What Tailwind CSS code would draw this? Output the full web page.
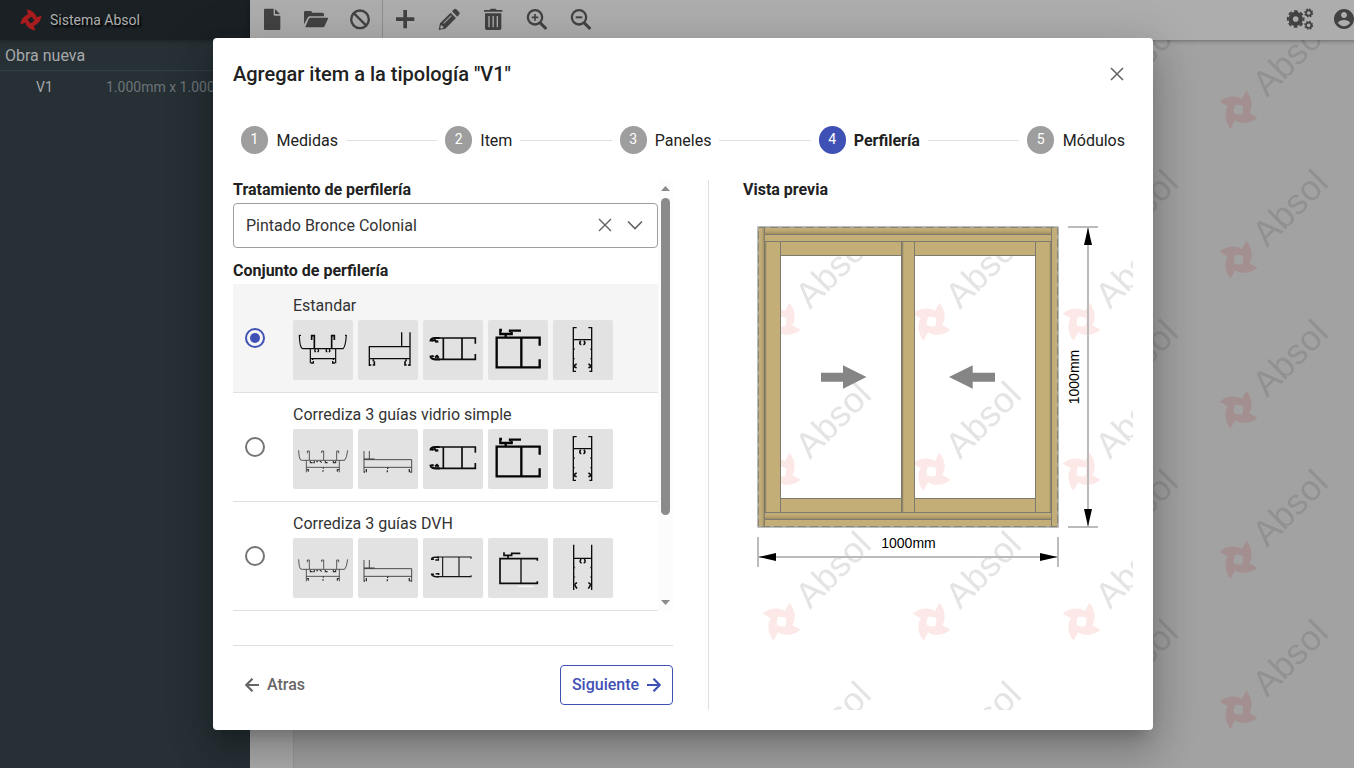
<!DOCTYPE html>
<html lang="es">
<head>
<meta charset="utf-8">
<title>Sistema Absol</title>
<script src="https://cdn.jsdelivr.net/npm/@tailwindcss/browser@4"></script>
</head>
<body class="h-[768px] overflow-hidden bg-[#a2a2a2] font-['Roboto',sans-serif] text-[#212121]">
<svg class="absolute h-0 w-0" aria-hidden="true">
  <defs>
    <path id="logo" fill-rule="evenodd" d="M10-32L24-57Q42-36 39-8Q38 2 32 10L57 24Q36 42 8 39Q-2 38-10 32L-24 57Q-42 36-39 8Q-38-2-32-10L-57-24Q-36-42-8-39Q2-38 10-32ZM-11-14Q-16-2-14 11Q-2 16 11 14Q16 2 14-11Q2-16-11-14Z"/>
    <pattern id="wmPreview" width="150" height="150" patternUnits="userSpaceOnUse" patternTransform="translate(0 30)">
      <use href="#logo" transform="translate(38.5 111.7) scale(.333)" fill="#fde8e8"/>
      <text transform="translate(67 100) rotate(-45)" font-family="Liberation Sans, sans-serif" font-size="35.700" fill="#e4e4e4">Absol</text>
    </pattern>
    <pattern id="wmCanvas" width="150" height="150" patternUnits="userSpaceOnUse" patternTransform="translate(6 -42)">
      <use href="#logo" transform="translate(38.5 111.7) scale(.333)" fill="#a38f8f"/>
      <text transform="translate(67 100) rotate(-45)" font-family="Liberation Sans, sans-serif" font-size="35.700" fill="#919191">Absol</text>
    </pattern>
    <symbol id="p-frame" viewBox="0 0 180 180"><g fill="none" stroke="#0c0c0c" stroke-width="4">
      <path d="M19 45Q20 78 26 84L30 86H150Q158 80 160 45M20 46h4M156 46h4M52 86v44M128 86v44M52 116h76" stroke-width="3.500"/>
      <path d="M56 60V47h8v38M124 60V47h-8v38" stroke-width="5"/>
      <path d="M67 87q-4 8 2 8M75 87q4 8-2 8M101 87q-4 8 2 8M109 87q4 8-2 8M59 116v4M54 129h7v-6M121 116v4M126 129h-7v-6" stroke-width="4"/></g></symbol>
    <symbol id="p-sill" viewBox="0 0 180 180"><g fill="none" stroke="#0c0c0c" stroke-width="4">
      <path d="M34 138V80H156M156 37V138M131 37V80M34 116H156M34 135h6M156 135h-6"/><path d="M46 118v6M49 124v11h-5M144 118v6M141 124v11h5" stroke-width="5"/></g></symbol>
    <symbol id="p-rail" viewBox="0 0 180 180"><g fill="none" stroke="#0c0c0c" stroke-width="5">
      <path d="M46 54H157V71M46 118H157V102M61 54v64M117 54v64"/>
      <path d="M50 54H36q-12 1-13 7h6l3 3M34 58l5 7 7-1M50 118H36q-12-1-13-8l9-2M36 112l6-4 5 5" stroke-width="6.500"/></g></symbol>
    <symbol id="p-stile" viewBox="0 0 180 180"><g fill="none" stroke="#050505" stroke-width="6">
      <path d="M155 77V53H26V142H155V118" stroke-width="7"/><path d="M100 53V142" stroke-width="7"/>
      <path d="M42 30h-5v12h34v-6M53 42v12M66 37V32H99" stroke-width="7"/></g></symbol>
    <symbol id="p-post" viewBox="0 0 180 180"><g fill="none" stroke="#0c0c0c" stroke-width="4">
      <path d="M71 23H61V154H69M106 23H116V154H109M61 59H116"/><path d="M83 62q-6 10 2 12M93 62q6 10-2 12M71 132q-9 3-5 10l5 1M106 132q9 3 5 10l-5 1" stroke-width="5"/><path d="M64 85v5M113 85v5M64 114v4M113 114v4" stroke-width="2"/></g></symbol>
    <symbol id="p-frame3" viewBox="0 0 180 180"><g fill="none" stroke="#333" stroke-width="2.4">
      <path d="M17 64Q18 88 23 93L28 94H155Q161 88 164 64M40 94v36M139 94v36M40 115h99M43 73v-7h6v27M86 72v-6h6v27M137 73v-7h-6v27"/>
      <path d="M52 95v6h7M64 95v6h-3M70 98h5M80 95l6 6M97 95v6h7M121 95v6h7v-6M41 122h5v6M91 115v4M90 123v5M138 122h-5v6" stroke-width="3.4"/></g></symbol>
    <symbol id="p-sill3" viewBox="0 0 180 180"><g fill="none" stroke="#333" stroke-width="2.6">
      <path d="M18 66V131M34 66V91M18 92H161V131M18 115H161"/><path d="M18 90H50" stroke-width="3"/><path d="M25 120v10M89 115v5M88 124v6M154 120v10M18 129h3M161 129h-4" stroke-width="4"/></g></symbol>
    <symbol id="p-rail3" viewBox="0 0 180 180"><g fill="none" stroke="#161616" stroke-width="3.400">
      <path d="M42 57H144V62M42 116H144V112M59 57v59M108 57v59"/>
      <path d="M48 58H36q-10 0-10 6h7M37 66h9v-5M48 116H38q-11-2-12-7h7M38 107h9v4" stroke-width="4.500"/></g></symbol>
    <symbol id="p-stile3" viewBox="0 0 180 180"><path d="M90 145H136" stroke="#fff" stroke-width="3"/><g fill="none" stroke="#0c0c0c" stroke-width="5">
      <path d="M148 68V62H36V136H148V130"/><path d="M99 61V136" stroke-width="4"/>
      <path d="M48 43v9h23v-6h26M60 52v9" stroke-width="5"/></g></symbol>
    <symbol id="p-post3" viewBox="0 0 180 180"><g fill="none" stroke="#0c0c0c" stroke-width="4">
      <path d="M62 20V156M116 20V156M62 61H116"/><path d="M84 63q-6 10 2 12M94 63q6 10-2 12M72 134q-9 3-5 10l5 8M106 134q9 3 5 10l-5 8" stroke-width="4.5"/><path d="M65 86v5M113 86v5M65 115v4M113 115v4" stroke-width="2"/></g></symbol>
    <linearGradient id="woodBand" x1="0" y1="0" x2="0" y2="1"><stop offset="0" stop-color="#c4af79"/><stop offset=".5" stop-color="#bda873"/><stop offset="1" stop-color="#9a8759"/></linearGradient>
    <linearGradient id="woodSide" x1="0" y1="0" x2="1" y2="0"><stop offset="0" stop-color="#c4af79"/><stop offset=".5" stop-color="#c0ab76"/><stop offset="1" stop-color="#a08d60"/></linearGradient>
  </defs>
</svg>

<div class="relative flex h-[768px] w-[1366px]">
  <!-- Sidebar -->
  <aside class="flex w-[250px] shrink-0 flex-col bg-[#263035] text-[#a6a9ab]">
    <div class="flex h-10 items-center bg-[#1a2024] pl-5 shadow-[0_1px_4px_rgba(0,0,0,0.3)]">
      <svg class="h-[22px] w-[22px]" viewBox="-57 -57 114 114"><use href="#logo" transform="rotate(-45) scale(.95)" fill="#a81c1e"/></svg>
      <span class="ml-2 text-sm text-[#adadad] [text-shadow:2px_2px_2px_#000]">Sistema Absol</span>
    </div>
    <div class="flex h-[31px] items-center border-b border-[#323e43] pt-px pl-[5px] text-base">Obra nueva</div>
    <div class="flex h-8 items-center text-sm">
      <span class="ml-9 w-[70px]">V1</span><span class="whitespace-nowrap text-[#6c7478]">1.000mm x 1.000mm</span>
    </div>
  </aside>

  <main class="flex min-w-0 flex-1 flex-col">
    <!-- Toolbar -->
    <header class="z-0 flex h-10 shrink-0 items-start bg-[#adadad] text-[#424242] shadow-[0_1px_4px_rgba(0,0,0,0.35)]">
      <div class="flex h-full border-r border-[#8f8f8f]">
        <div class="flex w-11 justify-center pt-[7px]"><svg class="size-6" viewBox="0 0 72 72" fill="currentColor"><path d="M15 5H41V23Q41 26 44 26H61V66Q61 69 58 69H15Q12 69 12 66V8Q12 5 15 5ZM45 6L60 21H45Z"/></svg></div>
        <div class="flex w-11 justify-center pt-[7px]"><svg class="size-6" viewBox="0 0 72 72" fill="currentColor"><path d="M0 52V16Q0 12 4 12H20Q24 12 24 17H55Q60 17 60 22V28H18Q13 28 11 32ZM4 60L14 36Q16 32 20 32H70Q73 32 72 35L62 57Q60 61 56 61H5Q3 61 4 60Z"/></svg></div>
        <div class="flex w-[44px] justify-center pt-[7px]"><svg class="size-6" viewBox="0 0 72 72" fill="none" stroke="currentColor" stroke-width="7"><circle cx="36" cy="37" r="26.5"/><path d="M18 19L54 55"/></svg></div>
      </div>
      <div class="flex w-11 justify-center pt-[7px]"><svg class="size-6" viewBox="0 0 72 72" stroke="currentColor" stroke-width="11" stroke-linecap="butt"><path d="M9 36.5H64M36.500 9V64"/></svg></div>
      <div class="flex w-11 justify-center pt-[7px]"><svg class="size-6" viewBox="0 0 72 72"><path fill="currentColor" fill-rule="evenodd" d="M5 69L9 49L41 17L57 33L25 65ZM45 13L52 6Q55 4 58 7L67 16Q69 19 67 22L61 29ZM11 56L10 63L12 65L19 63V58H15V54ZM19 48L42 25L44 27L21 50Z"/></svg></div>
      <div class="flex w-11 justify-center pt-[7px]"><svg class="size-6" viewBox="0 0 72 72"><path fill="currentColor" fill-rule="evenodd" d="M9 9H26L29 5H44L47 9H64V14H9ZM12 19H61V64Q61 69 56 69H17Q12 69 12 64ZM22 27V61H26V27ZM34.500 27V61H38.500V27ZM47 27V61H51V27Z"/></svg></div>
      <div class="flex w-11 justify-center pt-[7px]"><svg class="size-6" viewBox="0 0 72 72" fill="none" stroke="currentColor" stroke-width="7"><circle cx="30" cy="31" r="21.500"/><path d="M45 47L64 66" stroke-width="9"/><path d="M20 31H40M30 21V41" stroke-width="5"/></svg></div>
      <div class="flex w-11 justify-center pt-[7px]"><svg class="size-6" viewBox="0 0 72 72" fill="none" stroke="currentColor" stroke-width="7"><circle cx="30" cy="31" r="21.500"/><path d="M45 47L64 66" stroke-width="9"/><path d="M20 31H40" stroke-width="6"/></svg></div>
      <div class="ml-auto mr-[10px] flex items-center gap-[18px] pt-[7px]">
        <svg class="h-6 w-7" viewBox="0 0 84 72" fill="none" stroke="currentColor">
          <circle cx="29" cy="36" r="15" stroke-width="13"/><circle cx="29" cy="36" r="23.500" stroke-width="6" stroke-dasharray="11 7.456" stroke-dashoffset="5.500"/>
          <circle cx="68" cy="18" r="8" stroke-width="5"/><circle cx="68" cy="18" r="11.500" stroke-width="4" stroke-dasharray="5 4.032"/>
          <circle cx="68" cy="55" r="8" stroke-width="5"/><circle cx="68" cy="55" r="11.500" stroke-width="4" stroke-dasharray="5 4.032"/>
        </svg>
        <svg class="size-6" viewBox="0 0 24 24" fill="currentColor"><path d="M12 2C6.480 2 2 6.480 2 12s4.480 10 10 10 10-4.480 10-10S17.520 2 12 2zm0 3c1.660 0 3 1.340 3 3s-1.340 3-3 3-3-1.340-3-3 1.340-3 3-3zm0 14.200c-2.500 0-4.710-1.280-6-3.220.03-1.990 4-3.080 6-3.080 1.990 0 5.970 1.090 6 3.080-1.290 1.940-3.500 3.220-6 3.220z"/></svg>
      </div>
    </header>
    <div class="flex min-h-0 flex-1">
      <div class="w-[44px] shrink-0 border-r border-[#999] bg-[#adadad]"></div>
      <svg class="h-full flex-1 bg-[#a2a2a2]"><rect width="100%" height="100%" fill="url(#wmCanvas)"/></svg>
    </div>
  </main>

  <!-- Dialog -->
  <section role="dialog" class="absolute left-[213px] top-[38px] flex h-[692px] w-[940px] flex-col rounded-[4px] bg-white px-5 pb-5 shadow-[0_11px_15px_-7px_rgba(0,0,0,0.2),0_24px_38px_3px_rgba(0,0,0,0.14),0_9px_46px_8px_rgba(0,0,0,0.12)]">
    <div class="flex h-[72px] shrink-0 items-center justify-between">
      <h2 class="text-xl font-medium">Agregar item a la tipología "V1"</h2>
      <svg class="mr-[9px] size-[14px]" viewBox="0 0 14 14" stroke="#616161" stroke-width="1.500"><path d="M1 1L13 13M13 1L1 13"/></svg>
    </div>

    <div class="mt-4 flex h-7 shrink-0 items-center gap-2 px-2 text-base">
      <span class="flex h-7 w-[27px] items-center justify-center rounded-full bg-[#9e9e9e] pb-0.5 text-sm text-white">1</span><span class="pt-0.5 pl-[0.6px]">Medidas</span><i class="h-px flex-1 bg-[#e0e0e0]"></i>
      <span class="flex h-7 w-[27px] items-center justify-center rounded-full bg-[#9e9e9e] pb-0.5 text-sm text-white">2</span><span class="pt-0.5">Item</span><i class="h-px flex-1 bg-[#e0e0e0]"></i>
      <span class="flex h-7 w-[27px] items-center justify-center rounded-full bg-[#9e9e9e] pb-0.5 text-sm text-white">3</span><span class="pt-0.5">Paneles</span><i class="h-px flex-1 bg-[#e0e0e0]"></i>
      <span class="flex h-7 w-[27px] items-center justify-center rounded-full bg-[#3f51b5] pb-0.5 text-sm text-white">4</span><span class="pt-0.5 font-bold">Perfilería</span><i class="h-px flex-1 bg-[#e0e0e0]"></i>
      <span class="flex h-7 w-[27px] items-center justify-center rounded-full bg-[#9e9e9e] pb-0.5 text-sm text-white">5</span><span class="pt-0.5 pl-[0.6px]">Módulos</span>
    </div>

    <div class="mt-[26px] flex min-h-0 flex-1">
      <!-- Form column -->
      <div class="flex w-[440px] shrink-0 flex-col">
        <div class="flex h-[431px] shrink-0">
          <div class="w-[425px]">
            <div class="h-[23px] text-base leading-[19px] font-bold">Tratamiento de perfilería</div>
            <div class="flex h-[45px] items-center rounded-[4px] border border-[#9e9e9e] pr-[14px] pl-3 text-base">
              <span class="flex-1 text-[#333]">Pintado Bronce Colonial</span>
              <svg class="mb-px size-[14px]" viewBox="0 0 14 14" stroke="#616161" stroke-width="1.400"><path d="M1 1L13 13M13 1L1 13"/></svg>
              <svg class="mb-px ml-[15px] h-[14px] w-4" viewBox="0 0 16 14" fill="none" stroke="#616161" stroke-width="1.600"><path d="M1 3.500L8 10.500L15 3.500"/></svg>
            </div>
            <div class="flex h-9 items-end pb-[3px] text-base leading-[20px] font-bold">Conjunto de perfilería</div>

            <div class="flex h-[109px] items-center border-b border-[#e0e0e0] bg-[#f5f5f5] pl-3">
              <span class="flex size-5 items-center justify-center rounded-full border-2 border-[#3f51b5]"><i class="size-[10px] rounded-full bg-[#3f51b5]"></i></span>
              <div class="mb-[3px] ml-7"><div class="mb-[2px] h-6 text-base text-[#333]">Estandar</div>
                <div class="flex gap-[5px]">
                  <svg class="size-[60px] rounded-[2px] bg-[#e2e2e2]"><use href="#p-frame"/></svg><svg class="size-[60px] rounded-[2px] bg-[#e2e2e2]"><use href="#p-sill"/></svg><svg class="size-[60px] rounded-[2px] bg-[#e2e2e2]"><use href="#p-rail"/></svg><svg class="size-[60px] rounded-[2px] bg-[#e2e2e2]"><use href="#p-stile"/></svg><svg class="size-[60px] rounded-[2px] bg-[#e2e2e2]"><use href="#p-post"/></svg>
                </div></div>
            </div>
            <div class="flex h-[109px] items-center border-b border-[#e0e0e0] pl-3">
              <span class="size-5 rounded-full border-2 border-[#757575]"></span>
              <div class="mb-[3px] ml-7"><div class="mb-[2px] h-6 text-base text-[#333]">Corrediza 3 guías vidrio simple</div>
                <div class="flex gap-[5px]">
                  <svg class="size-[60px] rounded-[2px] bg-[#e2e2e2]"><use href="#p-frame3"/></svg><svg class="size-[60px] rounded-[2px] bg-[#e2e2e2]"><use href="#p-sill3"/></svg><svg class="size-[60px] rounded-[2px] bg-[#e2e2e2]"><use href="#p-rail"/></svg><svg class="size-[60px] rounded-[2px] bg-[#e2e2e2]"><use href="#p-stile"/></svg><svg class="size-[60px] rounded-[2px] bg-[#e2e2e2]"><use href="#p-post"/></svg>
                </div></div>
            </div>
            <div class="flex h-[109px] items-center border-b border-[#e0e0e0] pl-3">
              <span class="size-5 rounded-full border-2 border-[#757575]"></span>
              <div class="mb-[3px] ml-7"><div class="mb-[2px] h-6 text-base text-[#333]">Corrediza 3 guías DVH</div>
                <div class="flex gap-[5px]">
                  <svg class="size-[60px] rounded-[2px] bg-[#e2e2e2]"><use href="#p-frame3"/></svg><svg class="size-[60px] rounded-[2px] bg-[#e2e2e2]"><use href="#p-sill3"/></svg><svg class="size-[60px] rounded-[2px] bg-[#e2e2e2]"><use href="#p-rail3"/></svg><svg class="size-[60px] rounded-[2px] bg-[#e2e2e2]"><use href="#p-stile3"/></svg><svg class="size-[60px] rounded-[2px] bg-[#e2e2e2]"><use href="#p-post3"/></svg>
                </div></div>
            </div>
          </div>
          <!-- Scrollbar -->
          <div class="flex w-[15px] flex-col items-center bg-[#fcfcfc]">
            <svg class="mt-[6px] h-[5px] w-[9px]" viewBox="0 0 9 5" fill="#8b8b8b"><path d="M0 5L4.500 0L9 5Z"/></svg>
            <i class="mt-[7px] h-[317px] w-[9px] rounded-full bg-[#8b8b8b]"></i>
            <svg class="mt-auto mb-[6px] h-[5px] w-[9px]" viewBox="0 0 9 5" fill="#8b8b8b"><path d="M0 0L4.500 5L9 0Z"/></svg>
          </div>
        </div>
        <div class="mt-[34px] flex items-center justify-between border-t border-[#e0e0e0] pt-[19px] text-base font-medium">
          <button class="flex items-center gap-2 pl-3 text-[#666]"><svg class="h-[14px] w-[14px]" viewBox="0 0 14 14" fill="none" stroke="currentColor" stroke-width="2.200"><path d="M14 7H1M7.500 .7L1.200 7L7.500 13.300"/></svg>Atras</button>
          <button class="flex h-10 w-[113px] items-center justify-center gap-2 rounded-[4px] border border-[#3f51b5] text-[#3f51b5]">Siguiente<svg class="h-[14px] w-[14px]" viewBox="0 0 14 14" fill="none" stroke="currentColor" stroke-width="2.200"><path d="M0 7H13M6.500 .7L12.800 7L6.500 13.300"/></svg></button>
        </div>
      </div>

      <!-- Preview column -->
      <div class="ml-[35px] flex w-[425px] flex-col border-l border-[#e0e0e0] pl-[34px]">
        <div class="h-[30px] text-base leading-[19px] font-bold">Vista previa</div>
        <svg class="h-[500px] w-[390px]" viewBox="743 210 390 500">
          <g transform="translate(743 180)"><rect y="30" width="390" height="500" fill="url(#wmPreview)"/></g>
          <g stroke="#7d7a70" stroke-width="1" fill="#c3ae78">
            <path fill-rule="evenodd" stroke="none" d="M758 227H1058V527H758ZM780.500 255.500V498.500H901.500V255.500ZM914.500 255.500V498.500H1035.500V255.500Z"/>
            <rect x="764.500" y="227.500" width="287" height="7" fill="url(#woodBand)"/>
            <rect x="764.500" y="234.500" width="287" height="7"/>
            <rect x="764.500" y="512.500" width="287" height="7" fill="url(#woodBand)"/>
            <rect x="764.500" y="519.500" width="287" height="7"/>
            <path fill="none" d="M780.500 241.500V512.500M1035.500 241.500V512.500M780.500 255.500H901.500M914.500 255.500H1035.500M780.500 498.500H901.500M914.500 498.500H1035.500"/>
            <rect x="758.500" y="227.500" width="6" height="299" fill="url(#woodSide)"/>
            <rect x="1051.500" y="227.500" width="6" height="299"/>
            <rect x="901.500" y="241.500" width="13" height="271"/>
          </g>
          <path stroke="#6f6a5a" stroke-opacity=".6" stroke-width="1.500" d="M765.500 242V512M1050.500 242V512M902.500 242V512"/>
          <rect x="758" y="227" width="300" height="300" fill="none" stroke="#8f8d86" stroke-width="1.200"/>
          <rect x="758" y="227" width="300" height="300" fill="none" stroke="#c4c4c4" stroke-width="1" stroke-dasharray="4 8" stroke-dashoffset="-8"/>
          <path fill="#858585" d="M821 372.700H843V365.300L866.500 377L843 388.700V381.700H821ZM995 372.700H972.700V365.300L949 377L972.700 388.700V381.700H995Z"/>
          <path fill="none" stroke="#bbb" stroke-width="2" d="M1088 227V527M1068 227H1098M1068 527H1098M758 557H1058M758 537V567M1058 537V567"/>
          <path d="M1088 227.500L1092 245H1084ZM1088 526.500L1092 509H1084ZM758.500 557L776 553V561ZM1057.500 557L1040 553V561Z"/>
          <g font-family="Liberation Sans, sans-serif" font-size="14" text-anchor="middle"><text x="908.500" y="548">1000mm</text><text transform="translate(1078.500 377) rotate(-90)">1000mm</text></g>
        </svg>
      </div>
    </div>
  </section>
</div>
</body>
</html>
